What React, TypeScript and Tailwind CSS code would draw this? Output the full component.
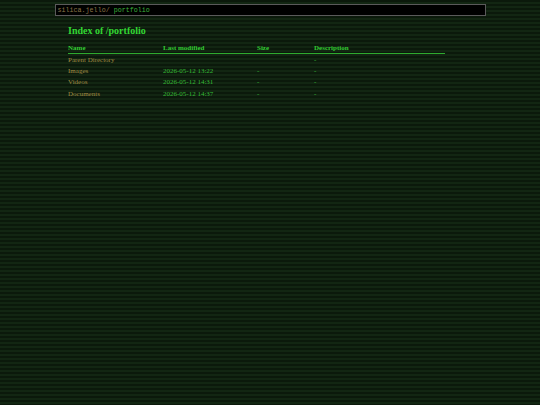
import React from "react";

const rows = [
  { name: "Parent Directory", modified: "", size: "", description: "-" },
  { name: "Images", modified: "2026-05-12 13:22", size: "-", description: "-" },
  { name: "Videos", modified: "2026-05-12 14:31", size: "-", description: "-" },
  { name: "Documents", modified: "2026-05-12 14:37", size: "-", description: "-" },
];

const App: React.FC = () => {
  return (
    <div className="min-h-screen w-full bg-[#0b190b] bg-[image:repeating-linear-gradient(to_bottom,#0b190b_0px,#0b190b_2px,#122612_2px,#122612_4px)] font-['Liberation_Serif',serif]">
      <div className="mx-auto w-[431px] pt-1">
        {/* address bar */}
        <div className="flex h-[12px] items-center border border-[#5a5a5a] bg-black px-[2px] font-['Liberation_Mono',monospace] text-[6.7px] leading-none">
          <span className="text-[#8a7446]">silica.jello/</span>
          <span className="ml-[4px] text-[#3bb33b]">portfolio</span>
        </div>
      </div>

      <div className="ml-[68px] mt-[10px] w-[377px]">
        <h1 className="text-[10px] font-bold leading-none text-[#33d633]">Index of /portfolio</h1>

        <table className="mt-[9px] w-full border-collapse text-left text-[7px] leading-none">
          <thead>
            <tr className="border-b border-[#2eaa2e] text-[#33cc33]">
              <th className="w-[95px] p-0 pb-[1px] font-bold">Name</th>
              <th className="w-[94px] p-0 pb-[1px] font-bold">Last modified</th>
              <th className="w-[57px] p-0 pb-[1px] font-bold">Size</th>
              <th className="p-0 pb-[1px] font-bold">Description</th>
            </tr>
          </thead>
          <tbody>
            {rows.map((row) => (
              <tr key={row.name} className="h-[11.5px]">
                <td className="p-0 pt-[1px] text-[#a08c44]">{row.name}</td>
                <td className="p-0 pt-[1px] text-[#36ba36]">{row.modified}</td>
                <td className="p-0 pt-[1px] text-[#36ba36]">{row.size}</td>
                <td className="p-0 pt-[1px] text-[#36ba36]">{row.description}</td>
              </tr>
            ))}
          </tbody>
        </table>
      </div>
    </div>
  );
};

export default App;
